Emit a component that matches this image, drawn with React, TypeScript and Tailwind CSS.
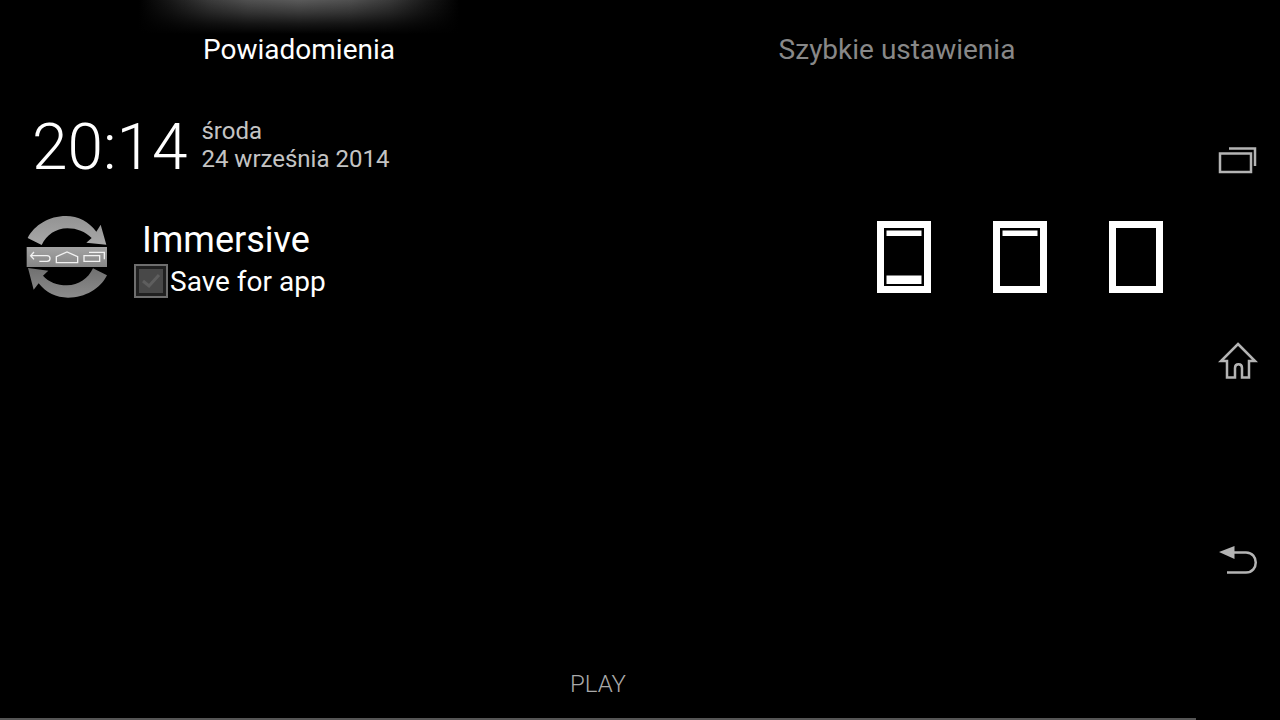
import React, { useState } from "react"

type Mode = "all" | "status" | "none"

const RotateIcon = () => (
  <svg viewBox="30 30 246 246" className="w-[82px] h-[82px] shrink-0" aria-hidden="true">
    <defs>
      <linearGradient id="arrowTop" x1="0" y1="0" x2="0" y2="1">
        <stop offset="0" stopColor="#939393" />
        <stop offset="1" stopColor="#a8a8a8" />
      </linearGradient>
      <linearGradient id="band" x1="0" y1="0" x2="0" y2="1">
        <stop offset="0" stopColor="#a4a4a4" />
        <stop offset="1" stopColor="#868686" />
      </linearGradient>
      <linearGradient id="arrowBottom" x1="0" y1="0" x2="0" y2="1">
        <stop offset="0" stopColor="#707070" />
        <stop offset="1" stopColor="#8c8c8c" />
      </linearGradient>
    </defs>
    <path
      fill="url(#arrowTop)"
      d="M35 96C55 57 99 30 150 30C187 30 218 47 241 77L254 56L271 116L211 110L227 96C207 77 183 67 154 67C119 67 92 87 77 117Z"
    />
    <rect x="32" y="123" width="241" height="60" fill="url(#band)" />
    <path
      fill="url(#arrowBottom)"
      d="M273 208C252 249 208 275 156 275C121 275 90 260 68 232L53 251L36 186L97 194L81 209C98 228 123 238 153 238C188 238 217 217 231 187Z"
    />
    <g fill="none" stroke="#f2f2f2" strokeWidth="4">
      <path d="M54 138L44 149L54 160M45 149H93C105 149 105 166 93 166H70" />
      <path d="M121 170V152L153 138L185 152V170Z" />
      <path d="M204 149H251V166H204ZM219 139H265V160" />
    </g>
  </svg>
)

const modes: { id: Mode; label: string }[] = [
  { id: "all", label: "Status and navigation bars" },
  { id: "status", label: "Status bar only" },
  { id: "none", label: "No bars" },
]

const ModeIcon = ({ mode }: { mode: Mode }) => (
  <svg viewBox="0 0 54 72" className="w-[54px] h-[72px]" fill="#fff" aria-hidden="true">
    <path fillRule="evenodd" d="M0 0H54V72H0ZM7 7V65H47V7Z" />
    {mode !== "none" && <rect x="9.5" y="9.5" width="35" height="5.5" />}
    {mode === "all" && <rect x="9.5" y="54.5" width="35" height="8.5" />}
  </svg>
)

const Tabs = () => (
  <header className="relative grid grid-cols-2 text-[28px] leading-8">
    {/* glow behind the active tab */}
    <div className="absolute left-1/4 top-0 -translate-x-1/2 w-80 h-[34px] bg-[linear-gradient(to_bottom,transparent,rgb(0_0_0/0.35)_35%,rgb(0_0_0/0.75)_70%,#000),linear-gradient(to_right,#000,#181818_10%,#3a3a3a_22%,#505050_34%,#5a5a5a_50%,#505050_66%,#3a3a3a_78%,#181818_90%,#000)]" />
    <button type="button" className="relative h-[100px] text-white">
      Powiadomienia
    </button>
    <button type="button" className="relative h-[100px] text-[#888]">
      Szybkie ustawienia
    </button>
  </header>
)

const Clock = () => (
  <section className="flex items-start gap-[14px] h-[92px] pl-8 pt-[17px]">
    <time className="text-[64px] leading-[62px] font-light">20:14</time>
    <p className="text-2xl leading-7 text-[#c4c4c4]">
      środa
      <br />
      24 września 2014
    </p>
  </section>
)

const ImmersiveNotification = () => {
  const [saved, setSaved] = useState(false)

  return (
    <section className="flex items-center pl-[26px] pr-[33px] py-6">
      <RotateIcon />
      <div className="ml-[26px] flex-1">
        <h2 className="pl-2 text-4xl leading-[48px]">Immersive</h2>
        <label className="flex items-start gap-[2px] h-[34px] text-[28px] leading-9">
          <span className="relative w-[34px] h-[34px]">
            <input
              type="checkbox"
              checked={saved}
              onChange={(e) => setSaved(e.target.checked)}
              className="peer appearance-none block w-[34px] h-[34px] border-2 border-[#6e6e6e] bg-[#484848] shadow-[inset_0_0_0_3px_#202020]"
            />
            <svg
              viewBox="0 0 34 34"
              className="absolute inset-0 pointer-events-none text-[#5e5e5e] peer-checked:text-white"
              fill="none"
              stroke="currentColor"
              strokeWidth="3"
              aria-hidden="true"
            >
              <path d="M9 17L15 22L25 11" />
            </svg>
          </span>
          Save for app
        </label>
      </div>
      <div className="flex gap-[62px]">
        {modes.map((m) => (
          <button key={m.id} type="button" aria-label={m.label}>
            <ModeIcon mode={m.id} />
          </button>
        ))}
      </div>
    </section>
  )
}

const NavBar = () => (
  <nav className="w-[84px] shrink-0 flex flex-col py-[60px] text-[#b4b4b4]">
    <button type="button" aria-label="Recent apps" className="flex-1 flex items-center justify-center">
      <svg viewBox="0 0 40 40" className="w-10 h-10" fill="none" stroke="currentColor" strokeWidth="2.5">
        <path d="M2 13.5H33V32H2ZM11 8.5H37V26" />
      </svg>
    </button>
    <button type="button" aria-label="Home" className="flex-1 flex items-center justify-center">
      <svg viewBox="0 0 40 40" className="w-10 h-10" fill="none" stroke="currentColor" strokeWidth="2.5">
        <path d="M20 4L37 21H31V37.500H24V28C24 23 17 23 17 28V37.500H9V21H3Z" />
      </svg>
    </button>
    <button type="button" aria-label="Back" className="flex-1 flex items-center justify-center">
      <svg viewBox="0 0 40 40" className="w-10 h-10" fill="none" stroke="currentColor" strokeWidth="2.5">
        <path d="M14 12.500H28C41 12.500 41 32.500 28 32.500H9" />
        <path d="M1 12L16.500 6V19Z" fill="currentColor" stroke="none" />
      </svg>
    </button>
  </nav>
)

export default function App() {
  return (
    <div className="flex min-h-screen bg-black text-white font-['Roboto',sans-serif]">
      <main className="flex-1 flex flex-col">
        <Tabs />
        <Clock />
        <ImmersiveNotification />
        <footer className="mt-auto border-b-2 border-[#555] pb-5 text-center text-2xl leading-7 font-light text-[#aaa]">
          PLAY
        </footer>
      </main>
      <NavBar />
    </div>
  )
}
